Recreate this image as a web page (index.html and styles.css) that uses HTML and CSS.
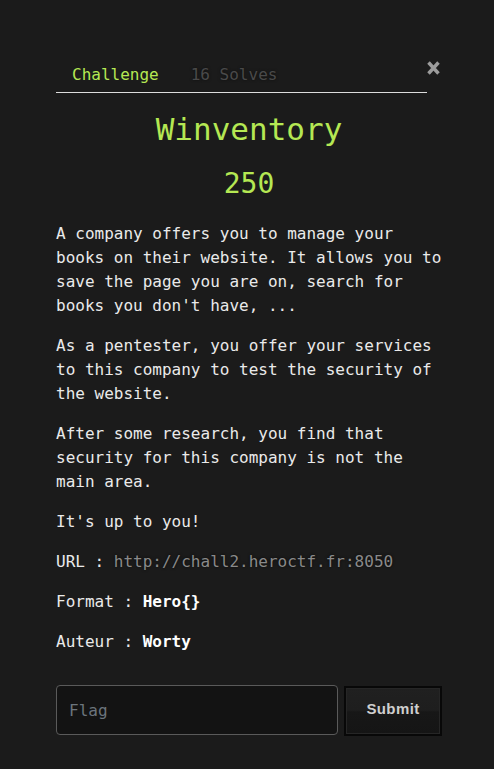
FILE: index.html
```html
<!DOCTYPE html>
<html>
<head>
<meta charset="utf-8">
<link rel="stylesheet" href="styles.css">
</head>
<body>
<div class="modal">
  <button class="close" aria-label="Close">
    <svg width="13" height="14" viewBox="0 0 13 14"><path d="M1.5 1.5 L11.5 12.5 M11.5 1.5 L1.5 12.5" stroke="#9c9c9c" stroke-width="3.4" stroke-linecap="butt"/></svg>
  </button>
  <nav class="tabs">
    <span class="tab active">Challenge</span>
    <span class="tab solves">16 Solves</span>
  </nav>
  <h2 class="name">Winventory</h2>
  <h3 class="value">250</h3>
  <div class="desc">
    <p>A company offers you to manage your books on their website. It allows you to save the page you are on, search for books you don't have, ...</p>
    <p>As a pentester, you offer your services to this company to test the security of the website.</p>
    <p>After some research, you find that security for this company is not the main area.</p>
    <p>It's up to you!</p>
    <p>URL : <span class="url">http://chall2.heroctf.fr:8050</span></p>
    <p>Format : <b>Hero{}</b></p>
    <p>Auteur : <b>Worty</b></p>
  </div>
  <form class="submit-row">
    <input class="flag" type="text" placeholder="Flag">
    <button class="submit" type="button">Submit</button>
  </form>
</div>
</body>
</html>
```
FILE: styles.css
```css
html, body {
  margin: 0;
  padding: 0;
  background: #1b1b1b;
}
body {
  font-family: "DejaVu Sans Mono", monospace;
  font-size: 16px;
  line-height: 24px;
  color: #eaeaea;
}
.modal {
  position: relative;
  width: 386px;
  margin-left: 56px;
  padding-top: 53px;
}
.close {
  position: absolute;
  top: 61px;
  right: 2px;
  padding: 0;
  border: 0;
  background: none;
  width: 13px;
  height: 14px;
  line-height: 0;
}
.tabs {
  display: flex;
  margin-right: 15px;
  border-bottom: 1px solid #dcdcdc;
}
.tab {
  padding: 10px 16px 5px 16px;
}
.tab.active {
  color: #b5e853;
}
.tab.solves {
  color: #4a4a4a;
  text-shadow: 0 0 3px rgba(0,0,0,0.6);
}
.name {
  margin: 18px 0 0 0;
  text-align: center;
  font-weight: normal;
  font-size: 31px;
  line-height: 36px;
  color: #b5e853;
}
.value {
  margin: 20px 0 0 0;
  text-align: center;
  font-weight: normal;
  font-size: 28px;
  line-height: 34px;
  color: #b5e853;
}
.desc {
  margin-top: 21px;
}
.desc p {
  margin: 0 0 16px 0;
}
.desc b {
  color: #ffffff;
}
.url {
  color: #8a8a8a;
  text-shadow: 0 0 3px rgba(0,0,0,0.8);
}
.submit-row {
  display: flex;
  gap: 6px;
  margin-top: 31px;
}
.flag {
  width: 282px;
  height: 50px;
  box-sizing: border-box;
  background: #131313;
  border: 1px solid #5a5a5a;
  border-radius: 4px;
  padding: 0 12px;
  font-family: "DejaVu Sans Mono", monospace;
  font-size: 16px;
  color: #eaeaea;
}
.flag::placeholder {
  color: #6c757d;
}
.submit {
  width: 98px;
  height: 50px;
  margin-top: 1px;
  padding: 0 0 6px 0;
  box-sizing: border-box;
  border: 2px solid #080808;
  background: linear-gradient(#202020 0%, #1e1e1e 48%, #171717 52%, #151515 100%);
  box-shadow: inset 0 0 0 1px #262626;
  color: #cfcfcf;
  font-family: "Liberation Sans", Arial, sans-serif;
  font-weight: bold;
  font-size: 15px;
  letter-spacing: 0.4px;
}
```
